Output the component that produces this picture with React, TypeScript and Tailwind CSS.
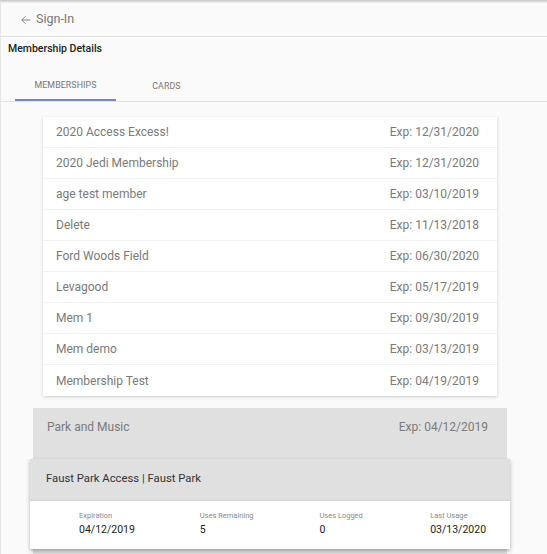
import React from "react";

const rows: [string, string][] = [
  ["2020 Access Excess!", "Exp: 12/31/2020"],
  ["2020 Jedi Membership", "Exp: 12/31/2020"],
  ["age test member", "Exp: 03/10/2019"],
  ["Delete", "Exp: 11/13/2018"],
  ["Ford Woods Field", "Exp: 06/30/2020"],
  ["Levagood", "Exp: 05/17/2019"],
  ["Mem 1", "Exp: 09/30/2019"],
  ["Mem demo", "Exp: 03/13/2019"],
  ["Membership Test", "Exp: 04/19/2019"],
];

const stats: [string, string][] = [
  ["Expiration", "04/12/2019"],
  ["Uses Remaining", "5"],
  ["Uses Logged", "0"],
  ["Last Usage", "03/13/2020"],
];

export default function App() {
  return (
    <div
      className="w-[547px] h-[554px] overflow-hidden bg-[#fafafa] relative"
      style={{ fontFamily: "Roboto, 'Liberation Sans', sans-serif" }}
    >
      <div className="h-[3px] bg-gradient-to-b from-[#c4c4c4] to-[#f6f6f6]" />
      <div className="border-l border-[#e6e6e6] h-full">
        <div className="h-[34px] flex items-center border-b border-[#e0e0e0] pl-[19px] text-[#777] text-[12.5px]">
          <svg width="12" height="12" viewBox="0 0 24 24" fill="none" stroke="#777" strokeWidth="1.8" className="mr-[4px]">
            <path d="M21 12H3.5M11 4.5L3.5 12 11 19.5" />
          </svg>
          <span>Sign-In</span>
        </div>
        <div className="pl-[7px] pt-[4px] text-[10.5px] text-[#222] leading-[15px] font-medium">
          Membership Details
        </div>
        <div className="mt-[11px] flex border-b border-[#e3e3e3] pl-[14px]">
          <div className="w-[101px] h-[34px] flex items-center justify-center pt-[6px] text-[8.8px] tracking-[0.1px] text-[#777] border-b-2 border-[#7986cb] -mb-[1px]">
            MEMBERSHIPS
          </div>
          <div className="w-[101px] h-[34px] flex items-center justify-center pt-[6px] text-[8.8px] tracking-[0.1px] text-[#777]">
            CARDS
          </div>
        </div>
        <div className="ml-[32px] w-[474px] pt-[15px]">
          <div className="mx-[10px] bg-white shadow-[0_1px_3px_rgba(0,0,0,0.18)]">
            {rows.map(([name, exp], i) => (
              <div
                key={name}
                className={
                  "h-[31px] flex items-center justify-between pl-[13px] pr-[18px] text-[12px] text-[#7a7a7a] " +
                  (i < rows.length - 1 ? "border-b border-[#f2f2f2]" : "")
                }
              >
                <span>{name}</span>
                <span>{exp}</span>
              </div>
            ))}
          </div>
          <div className="mt-[12px] bg-[#e0e0e0] h-[200px]">
            <div className="h-[36px] flex items-center justify-between pl-[14px] pr-[19px] text-[12px] text-[#7a7a7a] pt-[1px]">
              <span>Park and Music</span>
              <span>Exp: 04/12/2019</span>
            </div>
            <div className="mt-[15px] -mx-[3px] shadow-[0_2px_4px_rgba(0,0,0,0.3)]">
              <div className="h-[42px] flex items-center pl-[16px] bg-[#e0e0e0] text-[11.3px] text-[#333] border-b border-[#d6d6d6]">
                Faust Park Access | Faust Park
              </div>
              <div className="h-[48px] bg-white flex pl-[49px] pt-[9px]">
                {stats.map(([label, value], i) => (
                  <div
                    key={label}
                    className={
                      i === 0 ? "w-[121px]" : i === 1 ? "w-[120px]" : i === 2 ? "w-[111px]" : "w-[80px]"
                    }
                  >
                    <div className="text-[7.5px] text-[#8a8a8a] leading-[12px]">{label}</div>
                    <div className="text-[10.5px] text-[#222] leading-[16px]">{value}</div>
                  </div>
                ))}
              </div>
            </div>
          </div>
        </div>
      </div>
    </div>
  );
}
